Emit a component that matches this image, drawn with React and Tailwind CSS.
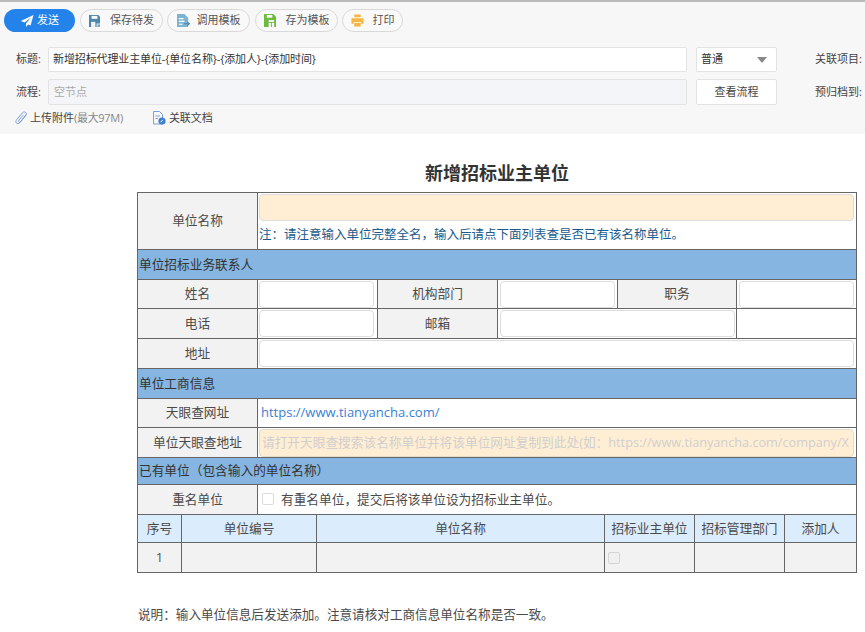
const FONT = '"Open Sans", "Noto Sans CJK SC", sans-serif';

const SendIcon = () => (
  <svg width="14" height="14" viewBox="0 0 14 14"><path d="M13.5 1 L0.8 7 L4.6 8.6 L11 3.6 L6 9.4 L6 13 L8.2 10.4 L10.6 11.6 Z" fill="#fff" /></svg>
);
const SaveIcon = () => (
  <svg width="11" height="12" viewBox="0 0 13 14"><path d="M0 0H11L13 2V14H0Z" fill="#4d87ad" /><rect x="3" y="1" width="7" height="3.5" fill="#f7f7f7" /><rect x="2.5" y="8" width="5" height="6" fill="#f7f7f7" /><rect x="9" y="10" width="4" height="4" fill="#f7f7f7" /><rect x="10" y="11" width="3" height="3" fill="#6fa3c5" /></svg>
);
const TemplateIcon = () => (
  <svg width="13" height="13" viewBox="0 0 14 14"><path d="M0 0H8L12 4V14H0Z" fill="#7db4d2" /><path d="M2 5H7M2 8H8M2 11H6" stroke="#fff" strokeWidth="1.2" /><path d="M7.5 10.5H13M11 8.5L13.5 10.5L11 12.5" stroke="#4d87ad" strokeWidth="1.2" fill="none" /></svg>
);
const SaveTplIcon = () => (
  <svg width="12" height="13" viewBox="0 0 13 14"><path d="M0 0H10L13 3V14H0Z" fill="#6cbb3f" /><rect x="3" y="1" width="6" height="3" fill="#f7f7f7" /><rect x="5" y="6.5" width="6" height="2" fill="#f7f7f7" /><rect x="5" y="9.5" width="2.5" height="4.5" fill="#f7f7f7" /><rect x="8.5" y="9.5" width="2.5" height="4.5" fill="#f7f7f7" /></svg>
);
const PrintIcon = () => (
  <svg width="13" height="13" viewBox="0 0 14 14"><rect x="3.5" y="0.5" width="7" height="3" fill="#f5b740" /><path d="M0.5 4.5H13.5V10.5H11V8.5H3V10.5H0.5Z" fill="#f5b740" /><rect x="3.5" y="9.5" width="7" height="4" fill="#f5b740" /></svg>
);
const ClipIcon = () => (
  <svg width="13" height="14" viewBox="0 0 13 14" fill="none"><path d="M11.2 3.6 L5 11.4 C3.8 12.8 2.2 12.9 1.4 12.1 C0.6 11.3 0.7 9.9 1.7 8.7 L7.2 2 C8.2 0.8 9.6 0.6 10.6 1.4 C11.6 2.2 11.7 3.4 10.8 4.5 L5.6 10.8 C5 11.4 4.2 11.3 3.8 10.9 C3.4 10.5 3.4 9.9 3.9 9.3 L8.4 3.8" stroke="#7b9fd8" strokeWidth="1" /></svg>
);
const DocIcon = () => (
  <svg width="13" height="14" viewBox="0 0 13 14" fill="none"><path d="M0.5 0.5H6.5L9.5 3.5V13H0.5Z" stroke="#7b9fd8" /><path d="M2.5 5H7M2.5 7.5H5" stroke="#7b9fd8" /><circle cx="9" cy="10" r="3.6" fill="#3f7fcf" /><path d="M7.6 11.2L9.8 8.8" stroke="#fff" /></svg>
);

const Tool = ({ icon, label, w, gap, extra = "" }) => (
  <button className={`flex h-[23px] items-center justify-center rounded-full border border-[#d9d9d9] bg-[#f9f9f9] text-[11px] text-[#555] ${w} ${gap} ${extra}`}>
    {icon}
    <span>{label}</span>
  </button>
);

const Label = ({ children }) => (
  <td className="border border-[#666] bg-[#f2f2f2] p-0 text-center text-[12.7px] text-[#4a4a4a]">{children}</td>
);
const InputCell = ({ colSpan, w = "w-[115px]", m = "ml-[1px]" }) => (
  <td colSpan={colSpan} className="border border-[#666] bg-white p-0">
    <div className={`h-[27px] rounded-[4px] border border-[#dddddd] bg-white ${m} ${w}`} />
  </td>
);
const Band = ({ children, h }) => (
  <tr className={h}>
    <td colSpan={6} className="border border-[#666] bg-[#85b5e0] p-0 pl-[1px] text-[12.7px] text-[#333]">{children}</td>
  </tr>
);

export default function App() {
  return (
    <div className="h-[632px] w-[865px] overflow-hidden bg-white" style={{ fontFamily: FONT }}>
      <div className="h-[134px] border-t-2 border-[#bbbbbb] bg-[#f7f7f7]">
        <div className="flex gap-[4px] pl-[4px] pt-[7px]">
          <button className="mr-[1px] flex h-[23px] w-[71px] items-center justify-center gap-[3px] rounded-full bg-[#2383ea] text-[11px] text-white">
            <SendIcon />
            <span>发送</span>
          </button>
          <Tool icon={<SaveIcon />} label="保存待发" w="w-[83px]" gap="gap-[10px]" />
          <Tool icon={<TemplateIcon />} label="调用模板" w="w-[83px]" gap="gap-[7px]" />
          <Tool icon={<SaveTplIcon />} label="存为模板" w="w-[83px]" gap="gap-[10px]" extra="ml-[1px]" />
          <Tool icon={<PrintIcon />} label="打印" w="w-[61px]" gap="gap-[9px]" />
        </div>
        <div className="mt-[15px] flex items-center text-[11px] text-[#444]">
          <span className="ml-[16px] w-[32px]">标题:</span>
          <div className="flex h-[25px] w-[639px] items-center rounded-[2px] border border-[#e3e3e3] bg-white pl-[4px] text-[11px] tracking-[-0.12px] text-[#333]">新增招标代理业主单位-{"{单位名称}"}-{"{添加人}"}-{"{添加时间}"}</div>
          <div className="ml-[9px] flex h-[25px] w-[81px] items-center justify-between rounded-[2px] border border-[#e3e3e3] bg-white pl-[4px] pr-[9px] text-[11px] text-[#333]">
            <span>普通</span>
            <span className="h-0 w-0 border-x-[5px] border-t-[6px] border-x-transparent border-t-[#888]" />
          </div>
          <span className="ml-[38px] whitespace-nowrap">关联项目:</span>
        </div>
        <div className="mt-[7px] flex items-center text-[11px] text-[#444]">
          <span className="ml-[16px] w-[32px]">流程:</span>
          <div className="flex h-[26px] w-[639px] items-center rounded-[2px] border border-[#e3e3e3] bg-[#f4f5f8] pl-[5px] text-[#aaa]">空节点</div>
          <div className="ml-[9px] flex h-[26px] w-[81px] items-center justify-center rounded-[2px] border border-[#e3e3e3] bg-white text-[#444]">查看流程</div>
          <span className="ml-[38px] whitespace-nowrap">预归档到:</span>
        </div>
        <div className="mt-[5px] flex h-[16px] items-center text-[11px] text-[#444]">
          <span className="ml-[15px] flex items-center gap-[2px]"><ClipIcon /><span>上传附件<span className="tracking-[-0.3px] text-[#888]">(最大97M)</span></span></span>
          <span className="ml-[30px] flex items-center gap-[3px]"><DocIcon />关联文档</span>
        </div>
      </div>

      <h1 className="ml-[137px] flex h-[58px] w-[720px] items-center justify-center pt-[19px] text-lg font-bold text-[#333]">新增招标业主单位</h1>

      <table className="ml-[137px] w-[719px] table-fixed border-collapse">
        <colgroup>
          <col className="w-[120px]" /><col className="w-[120px]" /><col className="w-[120px]" /><col className="w-[120px]" /><col className="w-[119px]" /><col className="w-[120px]" />
        </colgroup>
        <tbody>
          <tr className="h-[57px]">
            <Label>单位名称</Label>
            <td colSpan={5} className="border border-[#666] bg-white p-0 align-top">
              <div className="ml-[1px] mt-[1px] h-[27px] w-[595px] rounded-[4px] border border-[#dddddd] bg-[#ffeed3]" />
              <div className="ml-[1px] mt-[4px] text-[12.5px] leading-[20px] text-[#1b5a8c]">{"注\uFF1A请注意输入单位完整全名\uFF0C输入后请点下面列表查是否已有该名称单位。"}</div>
            </td>
          </tr>
          <Band h="h-[30px]">单位招标业务联系人</Band>
          <tr className="h-[29px]">
            <Label>姓名</Label>
            <InputCell />
            <Label>机构部门</Label>
            <InputCell m="ml-[2px]" />
            <Label>职务</Label>
            <InputCell m="ml-[2px]" />
          </tr>
          <tr className="h-[30px]">
            <Label>电话</Label>
            <InputCell />
            <Label>邮箱</Label>
            <InputCell colSpan={2} w="w-[235px]" m="ml-[2px]" />
            <td className="border border-[#666] bg-white p-0" />
          </tr>
          <tr className="h-[30px]">
            <Label>地址</Label>
            <InputCell colSpan={5} w="w-[595px]" />
          </tr>
          <Band h="h-[30px]">单位工商信息</Band>
          <tr className="h-[29px]">
            <Label>天眼查网址</Label>
            <td colSpan={5} className="border border-[#666] bg-white p-0 pl-[3px] text-[13px] text-[#3a80d6]">https://www.tianyancha.com/</td>
          </tr>
          <tr className="h-[30px]">
            <Label>单位天眼查地址</Label>
            <td colSpan={5} className="border border-[#666] bg-white p-0">
              <div className="ml-[1px] flex h-[28px] w-[595px] items-center overflow-hidden whitespace-nowrap rounded-[4px] border border-[#e3dcc8] bg-[#ffeed3] pl-[2px] text-[12.7px] text-[#cfcfcf]">
                {"请打开天眼查搜索该名称单位并将该单位网址复制到此处(如\uFF1Ahttps://www.tianyancha.com/company/X"}
              </div>
            </td>
          </tr>
          <Band h="h-[27px]">{"已有单位\uFF08包含输入的单位名称\uFF09"}</Band>
          <tr className="h-[30px]">
            <Label>重名单位</Label>
            <td colSpan={5} className="border border-[#666] bg-white p-0">
              <div className="flex items-center pl-[4px] text-[12.7px] text-[#4a4a4a]">
                <span className="h-[12px] w-[12px] rounded-[2px] border border-[#dcdcdc] bg-white" />
                <span className="ml-[7px]">{"有重名单位\uFF0C提交后将该单位设为招标业主单位。"}</span>
              </div>
            </td>
          </tr>
          <tr className="h-[28px] bg-[#dbecfd] text-center text-[12.7px] text-[#4a4a4a]">
            <td colSpan={6} className="border border-[#666] p-0">
              <div className="grid h-full grid-cols-[44px_135px_288px_90px_90px_1fr]">
                {["序号", "单位编号", "单位名称", "招标业主单位", "招标管理部门", "添加人"].map((t, i) => (
                  <span key={t} className={`whitespace-nowrap leading-[27px] ${i < 5 ? "border-r border-[#666]" : ""}`}>{t}</span>
                ))}
              </div>
            </td>
          </tr>
          <tr className="h-[30px] bg-[#f2f2f2] text-center text-[13px] text-[#555]">
            <td colSpan={6} className="border border-[#666] p-0">
              <div className="grid h-[29px] grid-cols-[44px_135px_288px_90px_90px_1fr] items-stretch">
                <span className="border-r border-[#666] leading-[29px]">1</span>
                <span className="border-r border-[#666]" />
                <span className="border-r border-[#666]" />
                <span className="flex items-center border-r border-[#666] pl-[3px]">
                  <span className="h-[12px] w-[12px] rounded-[2px] border border-[#d5d5d5] bg-[#f0f0f0]" />
                </span>
                <span className="border-r border-[#666]" />
                <span />
              </div>
            </td>
          </tr>
        </tbody>
      </table>

      <p className="ml-[138px] mt-[32px] text-[12.6px] leading-[20px] text-[#4a4a4a]">{"说明\uFF1A输入单位信息后发送添加。注意请核对工商信息单位名称是否一致。"}</p>
    </div>
  );
}
